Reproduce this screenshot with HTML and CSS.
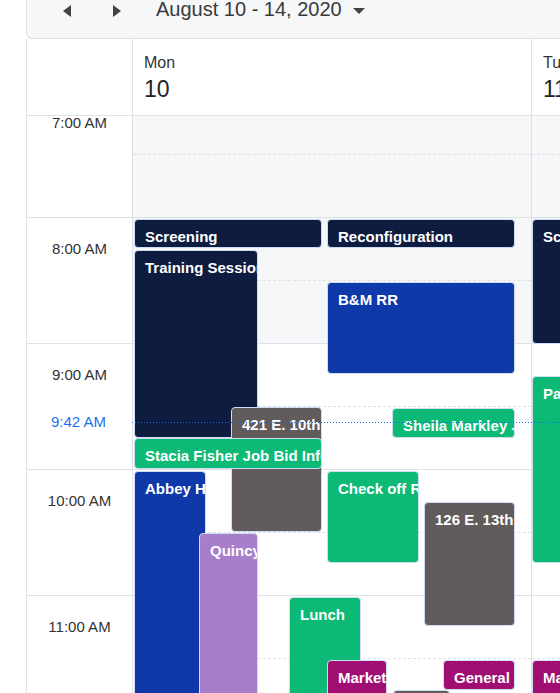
FILE: index.html
```html
<!DOCTYPE html>
<html lang="en">
<head>
<meta charset="utf-8">
<title>Scheduler - Week</title>
<link rel="stylesheet" href="styles.css">
</head>
<body>
<div class="scheduler">
  <div class="toolbar">
    <div class="toolbar-row">
      <span class="nav-btn prev"><svg width="8" height="12" viewBox="0 0 8 12"><path d="M8 0 L0 6 L8 12 Z"/></svg></span>
      <span class="nav-btn next"><svg width="8" height="12" viewBox="0 0 8 12"><path d="M0 0 L8 6 L0 12 Z"/></svg></span>
      <span class="range">August 10 - 14, 2020</span>
      <span class="range-caret"><svg width="12" height="6" viewBox="0 0 12 6"><path d="M0 0 L12 0 L6 6 Z"/></svg></span>
    </div>
  </div>

  <div class="grid header">
    <div class="corner"></div>
    <div class="day-head"><div class="day-name">Mon</div><div class="day-num">10</div></div>
    <div class="day-head"><div class="day-name">Tue</div><div class="day-num">11</div></div>
  </div>

  <div class="body">
    <div class="grid body-inner">
      <div class="time-col">
        <div class="time-slot"><span>7:00 AM</span></div>
        <div class="time-slot"><span>8:00 AM</span></div>
        <div class="time-slot"><span>9:00 AM</span></div>
        <div class="time-slot"><span>10:00 AM</span></div>
        <div class="time-slot"><span>11:00 AM</span></div>
      </div>

      <div class="day-col">
        <div class="slot off"><div class="half"></div><div class="half"></div></div>
        <div class="slot off"><div class="half"></div><div class="half"></div></div>
        <div class="slot"><div class="half"></div><div class="half"></div></div>
        <div class="slot"><div class="half"></div><div class="half"></div></div>
        <div class="slot"><div class="half"></div><div class="half"></div></div>

        <div class="event navy" style="left:1px;top:128px;width:188px;height:29px">Screening</div>
        <div class="event navy" style="left:194px;top:128px;width:188px;height:29px">Reconfiguration</div>
        <div class="event navy" style="left:1px;top:159px;width:124px;height:188px">Training Session</div>
        <div class="event blue" style="left:194px;top:191px;width:188px;height:92px">B&amp;M RR</div>
        <div class="event gray" style="left:98px;top:316px;width:91px;height:125px">421 E. 10th</div>
        <div class="event green" style="left:259px;top:317px;width:123px;height:30px">Sheila Markley Job</div>
        <div class="event green" style="left:1px;top:347px;width:188px;height:31px">Stacia Fisher Job Bid Info</div>
        <div class="event blue" style="left:1px;top:380px;width:72px;height:300px">Abbey Hill</div>
        <div class="event green" style="left:194px;top:380px;width:92px;height:92px">Check off Roof</div>
        <div class="event gray" style="left:291px;top:411px;width:91px;height:124px">126 E. 13th</div>
        <div class="event purple" style="left:66px;top:442px;width:59px;height:300px">Quincy Johnson</div>
        <div class="event green" style="left:156px;top:506px;width:72px;height:300px">Lunch</div>
        <div class="event magenta" style="left:194px;top:569px;width:60px;height:100px">Marketing</div>
        <div class="event magenta" style="left:310px;top:569px;width:72px;height:30px">General Jobs</div>
        <div class="event gray" style="left:260px;top:599px;width:57px;height:100px">Review</div>
      </div>

      <div class="day-col">
        <div class="slot off"><div class="half"></div><div class="half"></div></div>
        <div class="slot off"><div class="half"></div><div class="half"></div></div>
        <div class="slot"><div class="half"></div><div class="half"></div></div>
        <div class="slot"><div class="half"></div><div class="half"></div></div>
        <div class="slot"><div class="half"></div><div class="half"></div></div>

        <div class="event navy" style="left:0px;top:128px;width:188px;height:125px">Screening</div>
        <div class="event green" style="left:0px;top:285px;width:188px;height:187px">Parts Run</div>
        <div class="event magenta" style="left:0px;top:569px;width:188px;height:100px">Marketing</div>
      </div>
    </div>

    <div class="now-label">9:42 AM</div>
    <div class="now-line"></div>
  </div>
</div>
</body>
</html>
```

FILE: styles.css
```css
* {
  box-sizing: border-box;
}

html, body {
  margin: 0;
  padding: 0;
  background: #ffffff;
  overflow: hidden;
}

body {
  font-family: "Liberation Sans", Arial, sans-serif;
  color: #333333;
  width: 560px;
  height: 693px;
}

.scheduler {
  margin-left: 26px;
  width: 640px;
}

/* Toolbar */
.toolbar {
  height: 39px;
  background: #f6f7f9;
  border-left: 1px solid #dee2e6;
  border-bottom: 1px solid #dee2e6;
  border-bottom-left-radius: 6px;
  display: flex;
  align-items: flex-start;
}

.toolbar-row {
  display: flex;
  align-items: center;
  height: 20px;
  margin-top: -1px;
  padding-left: 36px;
}

.nav-btn {
  display: flex;
  width: 8px;
  height: 12px;
  margin-top: 3px;
}

.nav-btn svg path,
.range-caret svg path {
  fill: #424242;
}

.nav-btn.next {
  margin-left: 42px;
}

.range {
  margin-left: 35px;
  font-size: 20px;
  line-height: 20px;
  color: #3a3a3a;
  white-space: nowrap;
}

.range-caret {
  display: flex;
  margin-left: 11px;
  margin-top: 4px;
}

/* Grid structure */
.grid {
  display: grid;
  grid-template-columns: 106px 399px 1fr;
  border-left: 1px solid #dee2e6;
}

.header {
  height: 77px;
  border-bottom: 1px solid #dee2e6;
  background: #ffffff;
}

.corner,
.day-head {
  border-right: 1px solid #dee2e6;
}

.day-head {
  padding: 15px 0 0 11px;
  white-space: nowrap;
}

.day-name {
  font-size: 16px;
  line-height: 18px;
  color: #333333;
}

.day-num {
  margin-top: 3px;
  font-size: 23px;
  line-height: 28px;
  color: #222222;
}

.body {
  position: relative;
  height: 577px;
  overflow: hidden;
}

.body-inner {
  margin-top: -25px;
}

.time-col {
  border-right: 1px solid #dee2e6;
}

.time-slot {
  height: 126px;
  border-top: 1px solid #dee2e6;
  padding-top: 22px;
  text-align: center;
  font-size: 15px;
  line-height: 17px;
  color: #333333;
  white-space: nowrap;
}

.day-col {
  position: relative;
  border-right: 1px solid #dee2e6;
}

.slot {
  height: 126px;
  border-top: 1px solid #dee2e6;
  background: #ffffff;
}

.slot.off {
  background: #f6f7f9;
}

.half {
  height: 62px;
}

.half + .half {
  height: 63px;
  border-top: 1px dashed #dee2e6;
}

/* Events */
.event {
  position: absolute;
  border: 1px solid #cddcf2;
  border-radius: 4px;
  padding: 8px 0 0 10px;
  color: #ffffff;
  font-weight: bold;
  font-size: 15px;
  line-height: 17px;
  white-space: nowrap;
  overflow: hidden;
}

.navy { background: #0e1c40; }
.blue { background: #0f38a8; }
.green { background: #0cb975; }
.gray { background: #625b5b; }
.purple { background: #a77ec9; }
.magenta { background: #a10e72; }

/* Current time */
.now-label {
  position: absolute;
  left: 0;
  top: 297px;
  width: 105px;
  text-align: center;
  font-size: 15px;
  line-height: 17px;
  color: #1a73e8;
}

.now-line {
  position: absolute;
  left: 106px;
  right: 0;
  top: 306px;
  height: 1px;
  background-image: linear-gradient(to right, #0a6cf5 50%, transparent 50%);
  background-size: 3px 1px;
  background-repeat: repeat-x;
  z-index: 5;
}
```
